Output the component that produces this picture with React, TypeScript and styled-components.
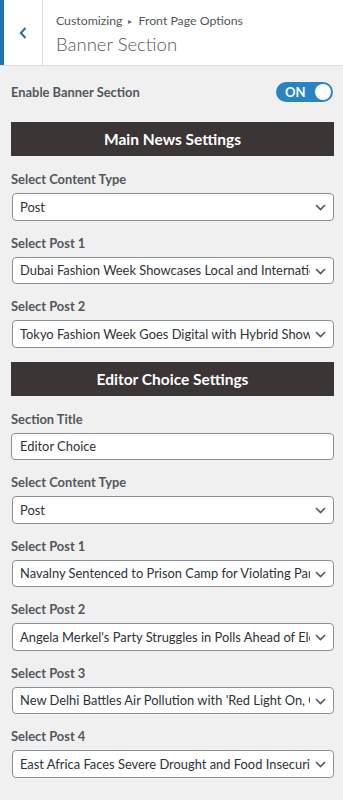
import React from 'react';
import styled, {createGlobalStyle} from 'styled-components';

const GlobalStyle = createGlobalStyle`
    body {
        margin: 0;
        background: #f0f0f1;
        font-family: Lato, "Noto Sans", sans-serif;
        color: #50575e;
    }
`

const Header = styled.div`
    display: flex;
    height: 65px;
    background: #fff;
    border-bottom: 1px solid #dcdcde;
`

const BackButton = styled.div`
    width: 38px;
    border-left: 4px solid #2271b1;
    border-right: 1px solid #dcdcde;
    display: flex;
    align-items: center;
    justify-content: center;
    color: #2271b1;
`

const HeaderText = styled.div`
    display: flex;
    flex-direction: column;
    padding: 11px 0 0 13px;
`

const Crumbs = styled.div`
    font-size: 12.3px;
    line-height: 20px;
    color: #50575e;
    display: flex;
    align-items: center;
    gap: 6px;
`

const Arrow = styled.span`
    font-size: 8px;
    color: #646970;
`

const Title = styled.div`
    font-size: 18.5px;
    font-weight: 300;
    line-height: 26px;
    color: #50575e;
`

const Panel = styled.div`
    padding: 16px 9px 40px 11px;
`

const ToggleRow = styled.div`
    display: flex;
    align-items: center;
    justify-content: space-between;
    height: 20px;
`

const Label = styled.div<{$flush?: boolean}>`
    font-size: 12.9px;
    font-weight: 700;
    line-height: 18px;
    color: #50575e;
    margin-bottom: ${p => (p.$flush ? '0' : '5px')};
`

const Switch = styled.div`
    position: relative;
    width: 57px;
    height: 20px;
    border-radius: 10px;
    background: #2a84c0;
    display: flex;
    align-items: center;
    margin-right: 1px;
`

const SwitchText = styled.span`
    font-size: 13px;
    font-weight: 700;
    color: #fff;
    padding-left: 9px;
`

const Knob = styled.span`
    position: absolute;
    right: 2px;
    top: 2px;
    width: 16px;
    height: 16px;
    border-radius: 50%;
    background: #fff;
`

const SectionHeading = styled.div<{$first?: boolean}>`
    margin-top: ${p => (p.$first ? '20px' : '14px')};
    height: 34px;
    background: #3b3535;
    color: #fff;
    font-size: 15.5px;
    font-weight: 700;
    display: flex;
    align-items: center;
    justify-content: center;
`

const Field = styled.div<{$first?: boolean}>`
    margin-top: ${p => (p.$first ? '14px' : '13px')};
`

const SelectWrap = styled.div`
    position: relative;
    margin-left: 1px;
`

const Select = styled.select`
    appearance: none;
    width: 100%;
    height: 27.5px;
    box-sizing: border-box;
    border: 1px solid #8c8f94;
    border-radius: 4px;
    background: #fff;
    padding: 0 23px 0 7px;
    font-family: inherit;
    font-size: 12.9px;
    color: #2c3338;
`

const Chevron = styled.svg`
    position: absolute;
    right: 8px;
    top: 11px;
    pointer-events: none;
`

const TextInput = styled.input`
    width: 100%;
    height: 27.5px;
    box-sizing: border-box;
    border: 1px solid #8c8f94;
    border-radius: 4px;
    background: #fff;
    padding: 0 8px;
    font-family: inherit;
    font-size: 12.9px;
    color: #2c3338;
`

interface ISelectProps {
    label: string;
    value: string;
    first?: boolean;
}

const SelectField = ({label, value, first}: ISelectProps) => (
    <Field $first={first}>
        <Label>{label}</Label>
        <SelectWrap>
            <Select defaultValue={value}>
                <option>{value}</option>
            </Select>
            <Chevron width="11" height="7" viewBox="0 0 11 7">
                <path d="M1 1 L5.5 5.5 L10 1" fill="none" stroke="#50575e" strokeWidth="1.6" />
            </Chevron>
        </SelectWrap>
    </Field>
)

export default function App() {
    return (
        <>
            <GlobalStyle />
            <Header>
                <BackButton>
                    <svg width="8" height="12" viewBox="0 0 8 12">
                        <path d="M6.5 1 L1.8 6 L6.5 11" fill="none" stroke="#2271b1" strokeWidth="2" />
                    </svg>
                </BackButton>
                <HeaderText>
                    <Crumbs>Customizing <Arrow>▸</Arrow> Front Page Options</Crumbs>
                    <Title>Banner Section</Title>
                </HeaderText>
            </Header>
            <Panel>
                <ToggleRow>
                    <Label $flush>Enable Banner Section</Label>
                    <Switch>
                        <SwitchText>ON</SwitchText>
                        <Knob />
                    </Switch>
                </ToggleRow>

                <SectionHeading $first>Main News Settings</SectionHeading>
                <SelectField first label="Select Content Type" value="Post" />
                <SelectField label="Select Post 1" value="Dubai Fashion Week Showcases Local and International Designers" />
                <SelectField label="Select Post 2" value="Tokyo Fashion Week Goes Digital with Hybrid Show Format" />

                <SectionHeading>Editor Choice Settings</SectionHeading>
                <Field $first>
                    <Label>Section Title</Label>
                    <TextInput defaultValue="Editor Choice" />
                </Field>
                <SelectField label="Select Content Type" value="Post" />
                <SelectField label="Select Post 1" value="Navalny Sentenced to Prison Camp for Violating Parole" />
                <SelectField label="Select Post 2" value="Angela Merkel's Party Struggles in Polls Ahead of Election" />
                <SelectField label="Select Post 3" value="New Delhi Battles Air Pollution with 'Red Light On, Gaadi Off' Campaign" />
                <SelectField label="Select Post 4" value="East Africa Faces Severe Drought and Food Insecurity" />
            </Panel>
        </>
    )
}
